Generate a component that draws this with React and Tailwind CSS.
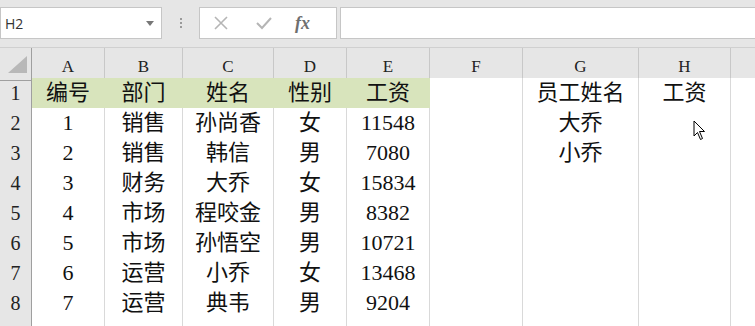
import React from "react";

const cols = ["A", "B", "C", "D", "E", "F", "G", "H", ""];

const rows = [
  ["编号", "部门", "姓名", "性别", "工资", "", "员工姓名", "工资", ""],
  ["1", "销售", "孙尚香", "女", "11548", "", "大乔", "", ""],
  ["2", "销售", "韩信", "男", "7080", "", "小乔", "", ""],
  ["3", "财务", "大乔", "女", "15834", "", "", "", ""],
  ["4", "市场", "程咬金", "男", "8382", "", "", "", ""],
  ["5", "市场", "孙悟空", "男", "10721", "", "", "", ""],
  ["6", "运营", "小乔", "女", "13468", "", "", "", ""],
  ["7", "运营", "典韦", "男", "9204", "", "", "", ""],
  ["", "", "", "", "", "", "", "", ""],
];

// column widths measured off the sheet (border included)
const gridCols = "grid w-[830px] grid-cols-[32px_73px_78px_91px_73px_83px_93px_116px_92px_99px]";

const FormulaBar = () => (
  <div className="h-[48px] bg-[#e6e6e6] flex items-start pt-[7px] border-b border-[#d0d0d0]">
    {/* name box */}
    <div className="w-[162px] h-[32px] bg-white border border-[#c6c6c6] flex items-center justify-between pl-[4px] pr-[7px]">
      <span className="text-[14px] text-[#333] font-['Open_Sans',sans-serif]">H2</span>
      <svg width="8" height="5" viewBox="0 0 8 5">
        <path d="M0 0 L8 0 L4 5 Z" fill="#777" />
      </svg>
    </div>
    <div className="w-[37px] h-[32px] flex flex-col items-center justify-center gap-[2px]">
      <span className="w-[2px] h-[2px] bg-[#9a9a9a]" />
      <span className="w-[2px] h-[2px] bg-[#9a9a9a]" />
      <span className="w-[2px] h-[2px] bg-[#9a9a9a]" />
    </div>
    {/* cancel / enter / fx */}
    <div className="w-[138px] h-[32px] bg-white border border-[#c6c6c6] flex items-center">
      <svg width="16" height="16" viewBox="0 0 16 16" className="ml-[13px]">
        <path d="M2 2 L14 14 M14 2 L2 14" stroke="#b5b5b5" strokeWidth="1.6" />
      </svg>
      <svg width="18" height="16" viewBox="0 0 18 16" className="ml-[26px]">
        <path d="M2 8 L7 13 L16 3" stroke="#b5b5b5" strokeWidth="2" fill="none" />
      </svg>
      <span className="ml-[22px] text-[18px] italic text-[#6f6f6f] font-['Liberation_Serif',serif] font-bold leading-none">
        fx
      </span>
    </div>
    <div className="ml-[3px] flex-1 h-[32px] bg-white border border-[#c6c6c6] border-r-0" />
  </div>
);

const Cursor = () => (
  <svg
    width="14"
    height="22"
    viewBox="0 0 14 22"
    className="absolute left-[693px] top-[120px]"
  >
    <path
      d="M1 1 L1 16 L4.5 12.5 L7.5 19.5 L9.5 18.5 L6.5 11.5 L11.5 11.5 Z"
      fill="white"
      stroke="black"
      strokeWidth="1"
      strokeLinejoin="round"
    />
  </svg>
);

const App = () => {
  return (
    <div className="relative w-[755px] h-[326px] overflow-hidden bg-white font-['Liberation_Serif','Noto_Sans_CJK_SC',serif]">
      <FormulaBar />

      {/* column headers */}
      <div className={`${gridCols} h-[30px] bg-[#e6e6e6]`}>
        <div className="border-r border-b border-[#9f9f9f] relative">
          <svg width="19" height="17" viewBox="0 0 19 17" className="absolute left-[8px] top-[8px]">
            <path d="M19 0 L19 17 L0 17 Z" fill="#b8b8b8" />
          </svg>
        </div>
        {cols.map((c, k) => (
          <div
            key={k}
            className="border-r border-b border-r-[#c8c8c8] border-b-[#9f9f9f] flex items-center justify-center pt-[6px] text-[17px] text-[#222]"
          >
            {c}
          </div>
        ))}
      </div>

      {rows.map((r, i) => (
        <div key={i} className={`${gridCols} h-[30px]`}>
          <div className="bg-[#e6e6e6] border-r border-b border-r-[#9f9f9f] border-b-[#c8c8c8] flex items-center justify-center text-[20px] text-[#222]">
            {i < 8 ? i + 1 : ""}
          </div>
          {r.map((v, j) => {
            const green = i === 0 && j < 5;
            return (
              <div
                key={j}
                className={
                  green
                    ? "bg-[#d8e4bc] border-r border-b border-[#d8e4bc] flex items-center justify-center text-[22px] text-[#111] leading-none"
                    : "bg-white border-r border-b border-[#d9d9d9] flex items-center justify-center text-[22px] text-[#111] leading-none"
                }
              >
                {v}
              </div>
            );
          })}
        </div>
      ))}

      <Cursor />
    </div>
  );
};

export default App;
